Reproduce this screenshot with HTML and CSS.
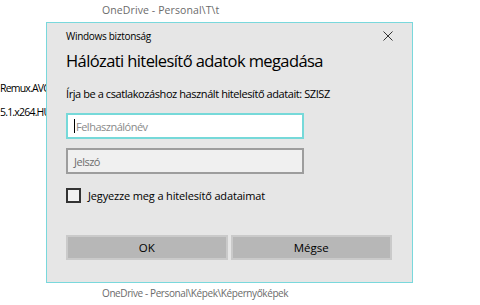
FILE: index.html
```html
<!DOCTYPE html>
<html lang="hu">
<head>
    <meta charset="UTF-8">
    <meta name="viewport" content="width=device-width, initial-scale=1.0">
    <title>Windows biztonság</title>
    <link rel="stylesheet" href="styles.css">
</head>
<body>
    <div class="explorer">
        <div class="path path-top">OneDrive - Personal\T\t</div>
        <div class="file-list">
            <div class="file">Remux.AVC</div>
            <div class="file">5.1.x264.HU</div>
        </div>
        <div class="path path-bottom">OneDrive - Personal\Képek\Képernyőképek</div>
    </div>

    <div class="dialog">
        <div class="dialog-bar">
            <span class="dialog-caption">Windows biztonság</span>
            <button class="close-btn" aria-label="Bezárás">
                <svg width="10" height="10" viewBox="0 0 10 10">
                    <path d="M0.5 0.5 L9.5 9.5 M9.5 0.5 L0.5 9.5" stroke="#333" stroke-width="1" fill="none"/>
                </svg>
            </button>
        </div>

        <h1 class="dialog-title">Hálózati hitelesítő adatok megadása</h1>
        <p class="dialog-text">Írja be a csatlakozáshoz használt hitelesítő adatait: SZISZ</p>

        <div class="fields">
            <div class="field field-active">
                <span class="caret"></span>
                <span class="placeholder">Felhasználónév</span>
            </div>
            <div class="field">
                <span class="placeholder dark">Jelszó</span>
            </div>
        </div>

        <label class="remember">
            <span class="checkbox"></span>
            <span>Jegyezze meg a hitelesítő adataimat</span>
        </label>

        <div class="buttons">
            <button class="btn">OK</button>
            <button class="btn">Mégse</button>
        </div>
    </div>
</body>
</html>
```

FILE: styles.css
```css
* {
    margin: 0;
    padding: 0;
    box-sizing: border-box;
}

body {
    font-family: "Open Sans", "Noto Sans", sans-serif;
    background: #ffffff;
    width: 480px;
    height: 305px;
    overflow: hidden;
    position: relative;
    color: #000;
}

/* background explorer window */
.explorer {
    display: flex;
    flex-direction: column;
    height: 305px;
    padding-top: 3px;
}

.path {
    font-size: 10px;
    color: #6b6b6b;
    padding-left: 102px;
    letter-spacing: -0.4px;
}

.path-top {
    font-size: 10.5px;
    letter-spacing: 0.1px;
}

.file-list {
    display: flex;
    flex-direction: column;
    gap: 8px;
    margin-top: 63px;
}

.file {
    font-size: 10.5px;
    letter-spacing: -0.8px;
    line-height: 16px;
}

.path-bottom {
    margin-top: auto;
    padding-bottom: 5px;
}

/* dialog */
.dialog {
    position: absolute;
    left: 46px;
    top: 22px;
    width: 367px;
    height: 261px;
    background: #e6e6e6;
    border: 1px solid #79d8dc;
    padding: 0 20px 0 19px;
}

.dialog-bar {
    display: flex;
    justify-content: space-between;
    align-items: center;
    height: 24px;
    margin-top: 1px;
}

.dialog-caption {
    font-size: 10px;
    letter-spacing: -0.3px;
}

.close-btn {
    background: none;
    border: none;
    width: 10px;
    height: 10px;
    margin-right: -1px;
    display: flex;
}

.dialog-title {
    font-size: 16.5px;
    font-weight: 400;
    letter-spacing: -0.6px;
    line-height: 24px;
    margin-top: 1px;
}

.dialog-text {
    font-size: 11px;
    letter-spacing: -0.42px;
    line-height: 16px;
    margin-top: 13px;
}

.fields {
    display: flex;
    flex-direction: column;
    gap: 9px;
    margin-top: 11px;
}

.field {
    width: 238px;
    height: 26px;
    border: 2px solid #9d9d9d;
    background: #f0f0f0;
    display: flex;
    align-items: center;
    padding-left: 6px;
    font-size: 11px;
}

.field-active {
    border-color: #76d9d9;
    background: #ffffff;
}

.caret {
    width: 1px;
    height: 14px;
    background: #000;
    margin-right: 1px;
}

.placeholder {
    color: #8a8a8a;
    letter-spacing: -0.5px;
}

.placeholder.dark {
    color: #6d6d6d;
}

.remember {
    display: flex;
    align-items: center;
    gap: 7px;
    margin-top: 14px;
    font-size: 11px;
    letter-spacing: -0.15px;
}

.checkbox {
    width: 15px;
    height: 15px;
    border: 2px solid #333;
    background: #f2f2f2;
}

.buttons {
    display: flex;
    gap: 3px;
    margin-top: 32px;
}

.btn {
    flex: 1;
    height: 25px;
    background: #b7b7b7;
    border: 2px solid #cacaca;
    font-family: inherit;
    font-size: 11.5px;
    color: #000;
}
```
